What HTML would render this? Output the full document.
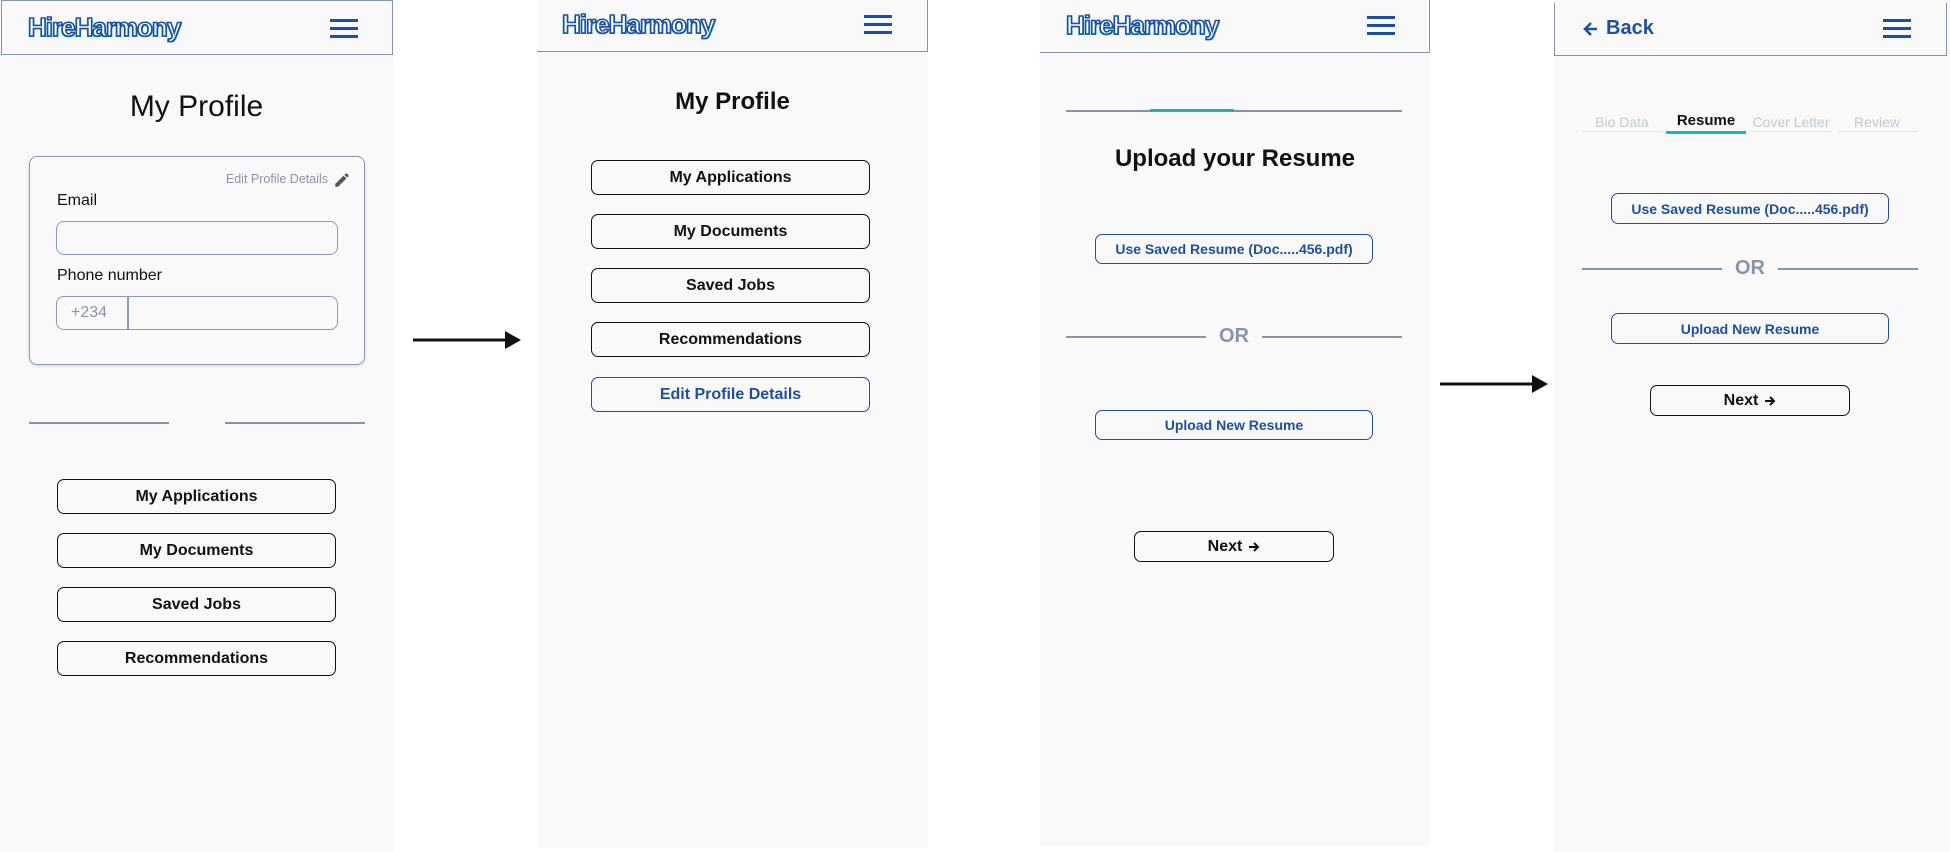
<!DOCTYPE html>
<html><head><meta charset="utf-8"><style>
*{box-sizing:border-box;margin:0;padding:0}
body{width:1950px;height:852px;background:#fff;position:relative;overflow:hidden;font-family:"Liberation Sans",sans-serif;color:#111}
.a{position:absolute}
.panel{position:absolute;background:#f9f9f9}
.hdr{position:absolute;border:1.5px solid #8593ad;border-top:none}
.logo{position:absolute;font-weight:bold;font-size:26px;letter-spacing:-1px;color:#fff;-webkit-text-stroke:1.6px #1e4fa0;text-shadow:1px 1px 0 #1bb5c4,-1px 1px 0 #1bb5c4;line-height:30px}
.ham{position:absolute;width:28px;height:18px}
.ham i{position:absolute;left:0;width:28px;height:3px;background:#1e4fa0}
.btn{position:absolute;border:1.5px solid #111;border-radius:7px;font-weight:bold;font-size:16px;display:flex;align-items:center;justify-content:center;background:#f9f9f9}
.bb{border-color:#1e4fa0;color:#1e4fa0}
.line{position:absolute;height:1.5px;background:#8593ad}
.ctr{position:absolute;text-align:center}
.nx svg{margin-left:6px}
</style></head><body>

<!-- Panel 1 -->
<div class="panel" style="left:0;top:0;width:393px;height:852px"></div>
<div class="hdr" style="left:1px;top:0;width:392px;height:55px;border-top:1.5px solid #8593ad"></div>
<div class="logo" style="left:28px;top:12px">HireHarmony</div>
<div class="ham" style="left:330px;top:19px"><i style="top:0"></i><i style="top:8px"></i><i style="top:16px"></i></div>
<div class="ctr" style="left:0;width:393px;top:90px;font-size:30px">My Profile</div>
<div class="a" style="left:29px;top:156px;width:336px;height:209px;border:1.5px solid #8a9bb8;border-radius:8px;box-shadow:0 1px 3px rgba(0,0,0,.15)"></div>
<div class="a" style="left:190px;top:172px;width:138px;text-align:right;font-size:12.5px;color:#8a94a8">Edit Profile Details</div>
<svg class="a" style="left:333px;top:171px" width="18" height="18" viewBox="0 0 24 24"><path d="M3 17.25V21h3.75L17.81 9.94l-3.75-3.75L3 17.25zM20.71 7.04a1 1 0 0 0 0-1.41l-2.34-2.34a1 1 0 0 0-1.41 0l-1.83 1.83 3.75 3.75 1.83-1.83z" fill="#555"/></svg>
<div class="a" style="left:57px;top:192px;font-size:16px">Email</div>
<div class="a" style="left:56px;top:221px;width:282px;height:34px;border:1.5px solid #8a9bb8;border-radius:8px"></div>
<div class="a" style="left:57px;top:267px;font-size:16px">Phone number</div>
<div class="a" style="left:56px;top:296px;width:282px;height:34px;border:1.5px solid #8a9bb8;border-radius:8px"></div>
<div class="a" style="left:127px;top:297px;width:1.5px;height:32px;background:#8a9bb8"></div>
<div class="a" style="left:71px;top:304px;font-size:16px;color:#8a94a8">+234</div>
<div class="line" style="left:29px;top:422px;width:140px"></div>
<div class="line" style="left:225px;top:422px;width:140px"></div>
<div class="btn" style="left:57px;top:479px;width:279px;height:35px">My Applications</div>
<div class="btn" style="left:57px;top:533px;width:279px;height:35px">My Documents</div>
<div class="btn" style="left:57px;top:587px;width:279px;height:35px">Saved Jobs</div>
<div class="btn" style="left:57px;top:641px;width:279px;height:35px">Recommendations</div>

<!-- Arrow 1 -->
<svg class="a" style="left:410px;top:328px" width="115" height="24"><line x1="3" y1="12" x2="95" y2="12" stroke="#111" stroke-width="3"/><path d="M95 3 L111 12 L95 21 Z" fill="#111"/></svg>

<!-- Panel 2 -->
<div class="panel" style="left:537px;top:0;width:391px;height:848px"></div>
<div class="hdr" style="left:537px;top:0;width:391px;height:52px;border-left:none"></div>
<div class="logo" style="left:562px;top:9px">HireHarmony</div>
<div class="ham" style="left:864px;top:15px"><i style="top:0"></i><i style="top:8px"></i><i style="top:16px"></i></div>
<div class="ctr" style="left:537px;width:391px;top:88px;font-size:24px;font-weight:bold">My Profile</div>
<div class="btn" style="left:591px;top:160px;width:279px;height:35px">My Applications</div>
<div class="btn" style="left:591px;top:214px;width:279px;height:35px">My Documents</div>
<div class="btn" style="left:591px;top:268px;width:279px;height:35px">Saved Jobs</div>
<div class="btn" style="left:591px;top:322px;width:279px;height:35px">Recommendations</div>
<div class="btn bb" style="left:591px;top:377px;width:279px;height:35px">Edit Profile Details</div>

<!-- Panel 3 -->
<div class="panel" style="left:1040px;top:0;width:390px;height:846px"></div>
<div class="hdr" style="left:1040px;top:0;width:390px;height:53px;border-left:none"></div>
<div class="logo" style="left:1066px;top:10px">HireHarmony</div>
<div class="ham" style="left:1367px;top:16px"><i style="top:0"></i><i style="top:8px"></i><i style="top:16px"></i></div>
<div class="line" style="left:1066px;top:110px;width:336px"></div>
<div class="a" style="left:1150px;top:109px;width:84px;height:3px;background:#14b8bb"></div>
<div class="ctr" style="left:1040px;width:390px;top:145px;font-size:24px;font-weight:bold">Upload your Resume</div>
<div class="btn bb" style="left:1095px;top:234px;width:278px;height:30px;font-size:14px">Use Saved Resume (Doc.....456.pdf)</div>
<div class="line" style="left:1066px;top:336px;width:140px"></div>
<div class="line" style="left:1262px;top:336px;width:140px"></div>
<div class="ctr" style="left:1206px;width:56px;top:325px;font-size:20px;font-weight:bold;color:#8a94a8">OR</div>
<div class="btn bb" style="left:1095px;top:410px;width:278px;height:30px;font-size:14px">Upload New Resume</div>
<div class="btn nx" style="left:1134px;top:531px;width:200px;height:31px">Next<svg width="12" height="12" viewBox="0 0 12 12"><path d="M1 6h9M6 2l4 4-4 4" fill="none" stroke="#111" stroke-width="2"/></svg></div>

<!-- Arrow 2 -->
<svg class="a" style="left:1437px;top:372px" width="115" height="24"><line x1="3" y1="12" x2="95" y2="12" stroke="#111" stroke-width="3"/><path d="M95 3 L111 12 L95 21 Z" fill="#111"/></svg>

<!-- Panel 4 -->
<div class="panel" style="left:1554px;top:0;width:396px;height:852px"></div>
<div class="hdr" style="left:1554px;top:3px;width:393px;height:53px;border-top:none"></div>
<svg class="a" style="left:1583px;top:20px" width="16" height="18" viewBox="0 0 16 18"><path d="M14 9H3M8 3L2 9l6 6" fill="none" stroke="#1e4fa0" stroke-width="2.5"/></svg>
<div class="a" style="left:1606px;top:17px;font-size:20px;font-weight:bold;color:#1e4fa0">Back</div>
<div class="ham" style="left:1883px;top:19px"><i style="top:0"></i><i style="top:8px"></i><i style="top:16px"></i></div>
<div class="ctr" style="left:1582px;width:80px;top:114px;font-size:14px;color:#c5c9d1">Bio Data</div>
<div class="a" style="left:1582px;top:131px;width:80px;height:1px;background:#d4ecee"></div>
<div class="ctr" style="left:1666px;width:80px;top:112px;font-size:15px;font-weight:bold">Resume</div>
<div class="a" style="left:1666px;top:131px;width:80px;height:3px;background:#14b8bb"></div>
<div class="ctr" style="left:1750px;width:82px;top:114px;font-size:14px;color:#c5c9d1">Cover Letter</div>
<div class="a" style="left:1751px;top:131px;width:80px;height:1px;background:#d4ecee"></div>
<div class="ctr" style="left:1837px;width:80px;top:114px;font-size:14px;color:#c5c9d1">Review</div>
<div class="a" style="left:1837px;top:131px;width:80px;height:1px;background:#d4ecee"></div>
<div class="btn bb" style="left:1611px;top:193px;width:278px;height:31px;font-size:14px">Use Saved Resume (Doc.....456.pdf)</div>
<div class="line" style="left:1582px;top:268px;width:140px"></div>
<div class="line" style="left:1778px;top:268px;width:140px"></div>
<div class="ctr" style="left:1722px;width:56px;top:257px;font-size:20px;font-weight:bold;color:#8a94a8">OR</div>
<div class="btn bb" style="left:1611px;top:313px;width:278px;height:31px;font-size:14px">Upload New Resume</div>
<div class="btn nx" style="left:1650px;top:385px;width:200px;height:31px">Next<svg width="12" height="12" viewBox="0 0 12 12"><path d="M1 6h9M6 2l4 4-4 4" fill="none" stroke="#111" stroke-width="2"/></svg></div>
</body></html>
